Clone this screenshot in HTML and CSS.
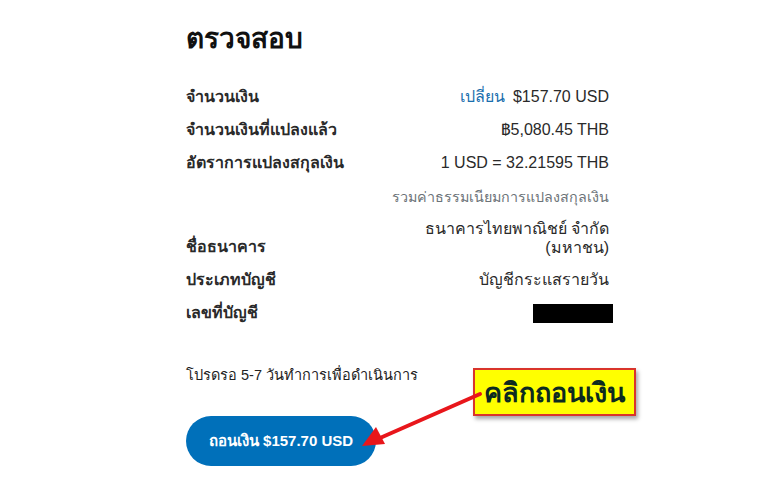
FILE: index.html
```html
<!DOCTYPE html>
<html lang="th">
<head>
<meta charset="utf-8">
<link rel="stylesheet" href="styles.css">
</head>
<body>
<main class="page">
  <h1 class="title">ตรวจสอบ</h1>
  <div class="rows">
    <div class="row"><span class="label">จำนวนเงิน</span><span class="value"><a class="link">เปลี่ยน</a> $157.70 USD</span></div>
    <div class="row"><span class="label">จำนวนเงินที่แปลงแล้ว</span><span class="value">฿5,080.45 THB</span></div>
    <div class="row"><span class="label">อัตราการแปลงสกุลเงิน</span><span class="value">1 USD = 32.21595 THB</span></div>
    <div class="note">รวมค่าธรรมเนียมการแปลงสกุลเงิน</div>
    <div class="row row-bank"><span class="label">ชื่อธนาคาร</span><span class="value">ธนาคารไทยพาณิชย์ จำกัด<br>(มหาชน)</span></div>
    <div class="row"><span class="label">ประเภทบัญชี</span><span class="value">บัญชีกระแสรายวัน</span></div>
    <div class="row"><span class="label">เลขที่บัญชี</span><span class="value"><span class="redact"></span></span></div>
  </div>
  <p class="wait">โปรดรอ 5-7 วันทำการเพื่อดำเนินการ</p>
  <div class="action">
    <button class="btn">ถอนเงิน $157.70 USD</button>
    <div class="callout">คลิกถอนเงิน</div>
    <svg class="arrow" width="130" height="70" viewBox="0 0 130 70">
      <line x1="122" y1="8" x2="22" y2="52" stroke="#e8161b" stroke-width="4" stroke-linecap="round"/>
      <polygon points="4,60 18,41 27,58" fill="#e8161b"/>
    </svg>
  </div>
</main>
</body>
</html>
```
FILE: styles.css
```css
* { box-sizing: border-box; }
html, body { margin: 0; padding: 0; background: #fff; }
body {
  font-family: "Liberation Sans", Tahoma, sans-serif;
  color: #2c2e2f;
  width: 779px;
  height: 486px;
  overflow: hidden;
}
.page {
  width: 427px;
  margin-left: 186px;
  padding-top: 22px;
}
.title {
  font-size: 28px;
  font-weight: bold;
  margin: 0 0 31px 0;
  line-height: 34px;
  color: #111;
}
.rows { display: flex; flex-direction: column; }
.row {
  display: flex;
  justify-content: space-between;
  align-items: flex-end;
  font-size: 16px;
  line-height: 20px;
  margin-bottom: 13px;
}
.label { font-weight: bold; color: #2a2a2a; }
.value { text-align: right; color: #2a2a2a; padding-right: 4px; }
.link { color: #1a6fae; margin-right: 3px; }
.note {
  text-align: right;
  font-size: 14.3px;
  color: #6c7378;
  margin: 2px 4px 13px 0;
  line-height: 18px;
}
.row-bank .value { line-height: 19px; }
.redact {
  display: inline-block;
  width: 80px;
  height: 19px;
  background: #000;
  vertical-align: middle;
  margin-right: -4px;
}
.wait {
  font-size: 14.5px;
  line-height: 18px;
  margin: 30px 0 0;
  color: #222;
}
.action {
  position: relative;
  margin-top: 32px;
}
.btn {
  width: 190px;
  height: 50px;
  border: none;
  border-radius: 25px;
  background: #0070ba;
  color: #fff;
  font-family: inherit;
  font-size: 15px;
  font-weight: bold;
}
.callout {
  position: absolute;
  left: 287px;
  top: -48px;
  width: 163px;
  height: 48px;
  background: #ffff00;
  border: 2px solid #d9342b;
  box-shadow: 2px 3px 4px rgba(0,0,0,0.35);
  font-size: 27px;
  font-weight: bold;
  color: #0c2a20;
  display: flex;
  align-items: center;
  justify-content: center;
}
.arrow {
  position: absolute;
  left: 172px;
  top: -30px;
}
```
